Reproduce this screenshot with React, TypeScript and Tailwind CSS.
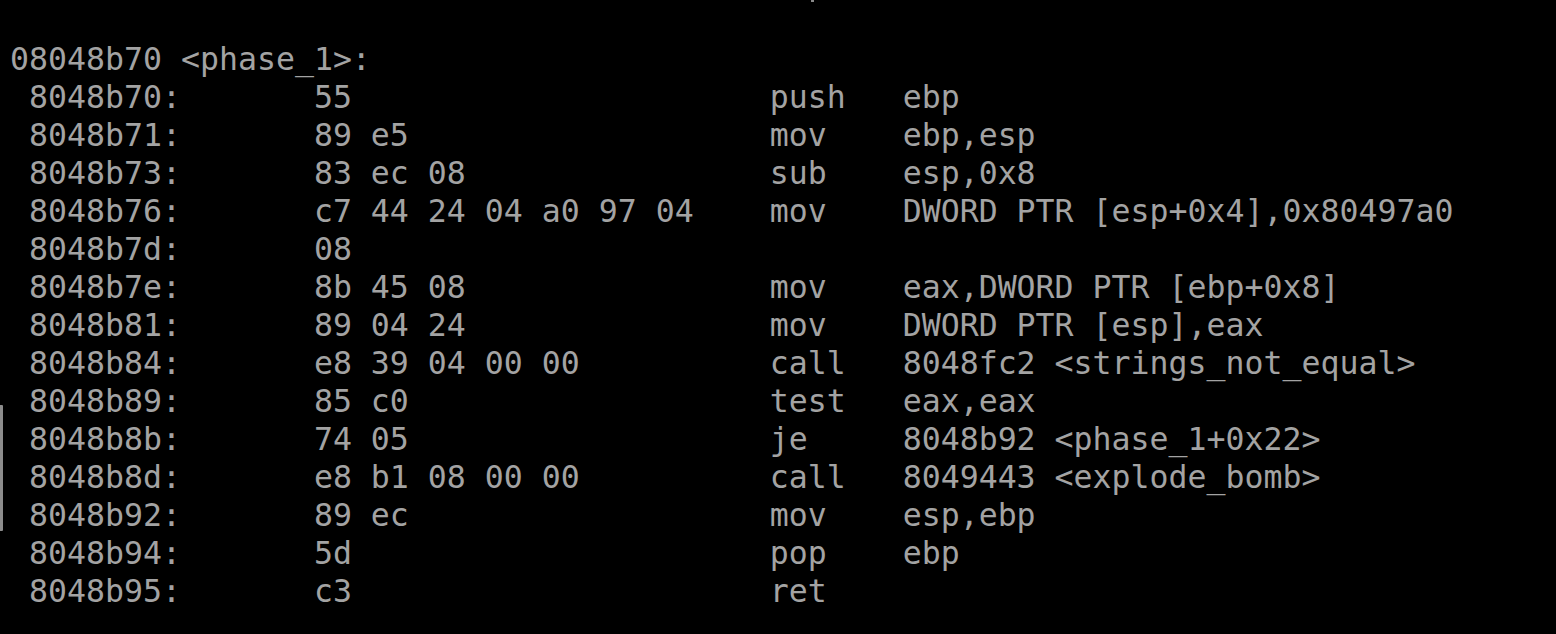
import React from "react";

const rows: [string, string, string, string][] = [
  ["8048b70", "55", "push", "ebp"],
  ["8048b71", "89 e5", "mov", "ebp,esp"],
  ["8048b73", "83 ec 08", "sub", "esp,0x8"],
  ["8048b76", "c7 44 24 04 a0 97 04", "mov", "DWORD PTR [esp+0x4],0x80497a0"],
  ["8048b7d", "08", "", ""],
  ["8048b7e", "8b 45 08", "mov", "eax,DWORD PTR [ebp+0x8]"],
  ["8048b81", "89 04 24", "mov", "DWORD PTR [esp],eax"],
  ["8048b84", "e8 39 04 00 00", "call", "8048fc2 <strings_not_equal>"],
  ["8048b89", "85 c0", "test", "eax,eax"],
  ["8048b8b", "74 05", "je", "8048b92 <phase_1+0x22>"],
  ["8048b8d", "e8 b1 08 00 00", "call", "8049443 <explode_bomb>"],
  ["8048b92", "89 ec", "mov", "esp,ebp"],
  ["8048b94", "5d", "pop", "ebp"],
  ["8048b95", "c3", "ret", ""],
];

function fmt(r: [string, string, string, string]) {
  const addr = (" " + r[0] + ":").padEnd(16, " ");
  const bytes = r[1].padEnd(24, " ");
  const mn = r[2] ? r[2].padEnd(7, " ") : "";
  return (addr + bytes + mn + r[3]).replace(/\s+$/, "");
}

export default function App() {
  return (
    <div className="relative w-[1556px] h-[634px] bg-black overflow-hidden">
      <div className="absolute left-[811px] top-0 w-[3px] h-[2px] bg-[#8a8a8a]" />
      <div className="absolute left-0 top-[405px] w-[3px] h-[126px] bg-[#8c8c8c] rounded-r-[1px]" />
      <pre
        className="pl-[10px] pt-[40px] m-0 text-[#a3a3a3] text-[31.56px] leading-[38px] whitespace-pre"
        style={{ fontFamily: '"DejaVu Sans Mono", monospace' }}
      >
        {["08048b70 <phase_1>:", ...rows.map(fmt)].join("\n")}
      </pre>
    </div>
  );
}
